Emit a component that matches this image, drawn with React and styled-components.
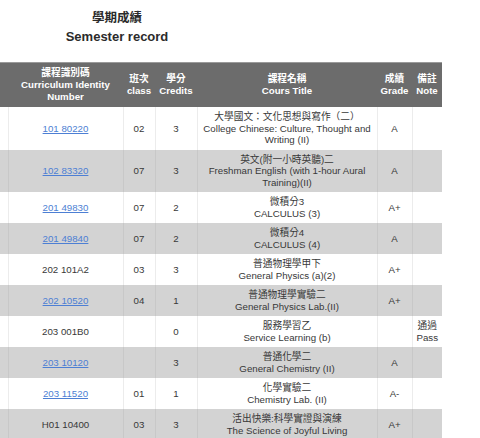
import React from "react";
import styled, { createGlobalStyle } from "styled-components";
// ------------------------------------------------------------

const GlobalStyle = createGlobalStyle`
  body {
    margin: 0;
    background: #ffffff;
    font-family: "Liberation Sans", Arial, "Noto Sans CJK TC", sans-serif;
    color: #383838;
  }
`;

const Page = styled.div`
  width: 480px;
  height: 438px;
  overflow: hidden;
`;

const Heading = styled.div`
  width: 234px;
  padding-top: 9px;
  height: 62px;
  box-sizing: border-box;
  text-align: center;
  font-weight: bold;
  color: #2b2b2b;
`;

const HeadingZh = styled.div`
  font-size: 12.5px;
  line-height: 18px;
`;

const HeadingEn = styled.div`
  font-size: 13px;
  line-height: 20px;
`;

const Table = styled.table`
  width: 442px;
  table-layout: fixed;
  border-collapse: collapse;
  font-size: 9.7px;
  line-height: 11.5px;
  text-align: center;
`;

const HeadCell = styled.th`
  background: #6c6c6c;
  color: #ffffff;
  font-weight: bold;
  font-size: 9.7px;
  line-height: 12px;
  padding: 4px 2px;
  border-top: 1px solid #9a9a9a;
`;

const Row = styled.tr`
  background: ${(p) => (p.$shaded ? "#d3d3d3" : "#ffffff")};
`;

const Cell = styled.td`
  padding: 4px 3px;
  vertical-align: middle;
  border-left: 1px solid
    ${(p) => (p.$shaded ? "rgba(0,0,0,0.05)" : "#ececec")};
`;

const CodeLink = styled.a`
  color: #4d7fd4;
  text-decoration: underline;
  text-underline-offset: 1px;
`;

const columns = [8, 115, 32, 42, 180, 35, 30];

const rows = [
  {
    code: "101 80220",
    link: true,
    cls: "02",
    credits: "3",
    zh: "大學國文：文化思想與寫作（二）",
    en: "College Chinese: Culture, Thought and Writing (II)",
    grade: "A",
  },
  {
    code: "102 83320",
    link: true,
    cls: "07",
    credits: "3",
    zh: "英文(附一小時英聽)二",
    en: "Freshman English (with 1-hour Aural Training)(II)",
    grade: "A",
  },
  {
    code: "201 49830",
    link: true,
    cls: "07",
    credits: "2",
    zh: "微積分3",
    en: "CALCULUS (3)",
    grade: "A+",
  },
  {
    code: "201 49840",
    link: true,
    cls: "07",
    credits: "2",
    zh: "微積分4",
    en: "CALCULUS (4)",
    grade: "A",
  },
  {
    code: "202 101A2",
    cls: "03",
    credits: "3",
    zh: "普通物理學甲下",
    en: "General Physics (a)(2)",
    grade: "A+",
  },
  {
    code: "202 10520",
    link: true,
    cls: "04",
    credits: "1",
    zh: "普通物理學實驗二",
    en: "General Physics Lab.(II)",
    grade: "A+",
  },
  {
    code: "203 001B0",
    cls: "",
    credits: "0",
    zh: "服務學習乙",
    en: "Service Learning (b)",
    grade: "",
    note: ["通過", "Pass"],
  },
  {
    code: "203 10120",
    link: true,
    cls: "",
    credits: "3",
    zh: "普通化學二",
    en: "General Chemistry (II)",
    grade: "A",
  },
  {
    code: "203 11520",
    link: true,
    cls: "01",
    credits: "1",
    zh: "化學實驗二",
    en: "Chemistry Lab. (II)",
    grade: "A-",
  },
  {
    code: "H01 10400",
    cls: "03",
    credits: "3",
    zh: "活出快樂:科學實證與演練",
    en: "The Science of Joyful Living",
    grade: "A+",
  },
];

const App = () => {
  return (
    <Page>
      <GlobalStyle />
      <Heading>
        <HeadingZh>學期成績</HeadingZh>
        <HeadingEn>Semester record</HeadingEn>
      </Heading>

      <Table>
        <colgroup>
          {columns.map((w, i) => (
            <col key={i} style={{ width: w }} />
          ))}
        </colgroup>
        <thead>
          <tr>
            <HeadCell />
            <HeadCell>
              課程識別碼
              <br />
              Curriculum Identity Number
            </HeadCell>
            <HeadCell>
              班次
              <br />
              class
            </HeadCell>
            <HeadCell>
              學分
              <br />
              Credits
            </HeadCell>
            <HeadCell>
              課程名稱
              <br />
              Cours Title
            </HeadCell>
            <HeadCell>
              成績
              <br />
              Grade
            </HeadCell>
            <HeadCell>
              備註
              <br />
              Note
            </HeadCell>
          </tr>
        </thead>
        <tbody>
          {rows.map((r, i) => {
            const shaded = i % 2 === 1;
            return (
              <Row key={r.code} $shaded={shaded}>
                <Cell $shaded={shaded} style={{ borderLeft: "none" }} />
                <Cell $shaded={shaded}>
                  {r.link ? <CodeLink>{r.code}</CodeLink> : r.code}
                </Cell>
                <Cell $shaded={shaded}>{r.cls}</Cell>
                <Cell $shaded={shaded}>{r.credits}</Cell>
                <Cell $shaded={shaded}>
                  {r.zh}
                  <br />
                  {r.en}
                </Cell>
                <Cell $shaded={shaded}>{r.grade}</Cell>
                <Cell $shaded={shaded}>
                  {r.note && (
                    <>
                      {r.note[0]}
                      <br />
                      {r.note[1]}
                    </>
                  )}
                </Cell>
              </Row>
            );
          })}
        </tbody>
      </Table>
    </Page>
  );
};

export default App;
